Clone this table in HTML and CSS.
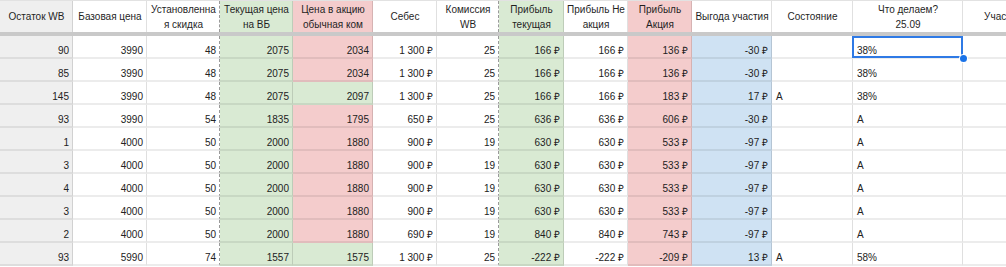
FILE: index.html
```html
<!DOCTYPE html>
<html lang="ru">
<head>
<meta charset="utf-8">
<title>Таблица</title>
<link rel="stylesheet" href="styles.css">
</head>
<body>
<div class="sheet">
  <div class="row head">
    <div class="c k">Остаток WB</div>
    <div class="c">Базовая цена</div>
    <div class="c dash">Установленна<br>я скидка</div>
    <div class="c g">Текущая цена<br>на ВБ</div>
    <div class="c p">Цена в акцию<br>обычная ком</div>
    <div class="c">Себес</div>
    <div class="c dash">Комиссия<br>WB</div>
    <div class="c g">Прибыль<br>текущая</div>
    <div class="c">Прибыль Не<br>акция</div>
    <div class="c p">Прибыль<br>Акция</div>
    <div class="c">Выгода участия</div>
    <div class="c">Состояние</div>
    <div class="c">Что делаем?<br>25.09</div>
    <div class="c">Участие</div>
  </div>
  <div class="band"></div>

  <div class="row">
    <div class="c n k">90</div><div class="c n">3990</div><div class="c n dash">48</div><div class="c n g">2075</div><div class="c n p">2034</div><div class="c n">1&nbsp;300&nbsp;₽</div><div class="c n dash">25</div><div class="c n g">166&nbsp;₽</div><div class="c n">166&nbsp;₽</div><div class="c n p">136&nbsp;₽</div><div class="c n b">-30&nbsp;₽</div><div class="c t"></div><div class="c t sel">38%</div><div class="c t"></div>
  </div>
  <div class="row">
    <div class="c n k">85</div><div class="c n">3990</div><div class="c n dash">48</div><div class="c n g">2075</div><div class="c n p">2034</div><div class="c n">1&nbsp;300&nbsp;₽</div><div class="c n dash">25</div><div class="c n g">166&nbsp;₽</div><div class="c n">166&nbsp;₽</div><div class="c n p">136&nbsp;₽</div><div class="c n b">-30&nbsp;₽</div><div class="c t"></div><div class="c t">38%</div><div class="c t"></div>
  </div>
  <div class="row">
    <div class="c n k">145</div><div class="c n">3990</div><div class="c n dash">48</div><div class="c n g">2075</div><div class="c n g">2097</div><div class="c n">1&nbsp;300&nbsp;₽</div><div class="c n dash">25</div><div class="c n g">166&nbsp;₽</div><div class="c n">166&nbsp;₽</div><div class="c n p">183&nbsp;₽</div><div class="c n b">17&nbsp;₽</div><div class="c t">A</div><div class="c t">38%</div><div class="c t"></div>
  </div>
  <div class="row">
    <div class="c n k">93</div><div class="c n">3990</div><div class="c n dash">54</div><div class="c n g">1835</div><div class="c n p">1795</div><div class="c n">650&nbsp;₽</div><div class="c n dash">25</div><div class="c n g">636&nbsp;₽</div><div class="c n">636&nbsp;₽</div><div class="c n p">606&nbsp;₽</div><div class="c n b">-30&nbsp;₽</div><div class="c t"></div><div class="c t">A</div><div class="c t"></div>
  </div>
  <div class="row">
    <div class="c n k">1</div><div class="c n">4000</div><div class="c n dash">50</div><div class="c n g">2000</div><div class="c n p">1880</div><div class="c n">900&nbsp;₽</div><div class="c n dash">19</div><div class="c n g">630&nbsp;₽</div><div class="c n">630&nbsp;₽</div><div class="c n p">533&nbsp;₽</div><div class="c n b">-97&nbsp;₽</div><div class="c t"></div><div class="c t">A</div><div class="c t"></div>
  </div>
  <div class="row">
    <div class="c n k">3</div><div class="c n">4000</div><div class="c n dash">50</div><div class="c n g">2000</div><div class="c n p">1880</div><div class="c n">900&nbsp;₽</div><div class="c n dash">19</div><div class="c n g">630&nbsp;₽</div><div class="c n">630&nbsp;₽</div><div class="c n p">533&nbsp;₽</div><div class="c n b">-97&nbsp;₽</div><div class="c t"></div><div class="c t">A</div><div class="c t"></div>
  </div>
  <div class="row">
    <div class="c n k">4</div><div class="c n">4000</div><div class="c n dash">50</div><div class="c n g">2000</div><div class="c n p">1880</div><div class="c n">900&nbsp;₽</div><div class="c n dash">19</div><div class="c n g">630&nbsp;₽</div><div class="c n">630&nbsp;₽</div><div class="c n p">533&nbsp;₽</div><div class="c n b">-97&nbsp;₽</div><div class="c t"></div><div class="c t">A</div><div class="c t"></div>
  </div>
  <div class="row">
    <div class="c n k">3</div><div class="c n">4000</div><div class="c n dash">50</div><div class="c n g">2000</div><div class="c n p">1880</div><div class="c n">900&nbsp;₽</div><div class="c n dash">19</div><div class="c n g">630&nbsp;₽</div><div class="c n">630&nbsp;₽</div><div class="c n p">533&nbsp;₽</div><div class="c n b">-97&nbsp;₽</div><div class="c t"></div><div class="c t">A</div><div class="c t"></div>
  </div>
  <div class="row">
    <div class="c n k">2</div><div class="c n">4000</div><div class="c n dash">50</div><div class="c n g">2000</div><div class="c n p">1880</div><div class="c n">690&nbsp;₽</div><div class="c n dash">19</div><div class="c n g">840&nbsp;₽</div><div class="c n">840&nbsp;₽</div><div class="c n p">743&nbsp;₽</div><div class="c n b">-97&nbsp;₽</div><div class="c t"></div><div class="c t">A</div><div class="c t"></div>
  </div>
  <div class="row">
    <div class="c n k">93</div><div class="c n">5990</div><div class="c n dash">74</div><div class="c n g">1557</div><div class="c n g">1575</div><div class="c n">1&nbsp;300&nbsp;₽</div><div class="c n dash">25</div><div class="c n g">-222&nbsp;₽</div><div class="c n">-222&nbsp;₽</div><div class="c n p">-209&nbsp;₽</div><div class="c n b">13&nbsp;₽</div><div class="c t">A</div><div class="c t">58%</div><div class="c t"></div>
  </div>
</div>
</body>
</html>
```
FILE: styles.css
```css
html, body {
  margin: 0;
  padding: 0;
  background: #ffffff;
  overflow: hidden;
}

body {
  width: 1006px;
  height: 267px;
  font-family: "Liberation Sans", Arial, sans-serif;
  font-size: 10px;
  color: #222222;
}

.sheet {
  --cols: 73px 74px 73px 73px 80px 64px 62px 65px 64px 64px 80px 81px 110px 80px;
  width: 1043px;
  border-top: 1px solid #e2e2e2;
}

.row {
  display: grid;
  grid-template-columns: var(--cols);
  height: 23px;
}

.row.head {
  height: 31px;
}

.band {
  height: 4px;
  background: #c9c9c9;
}

.c {
  box-sizing: border-box;
  display: flex;
  align-items: flex-end;
  justify-content: flex-end;
  padding: 0 3px 0 4px;
  line-height: 12px;
  white-space: nowrap;
  overflow: hidden;
  border-right: 1px solid rgba(0, 0, 0, 0.12);
  border-bottom: 2px solid rgba(0, 0, 0, 0.075);
}

.head .c {
  align-items: center;
  justify-content: center;
  text-align: center;
  line-height: 15px;
  border-bottom: none;
  color: #1f1f1f;
}

.t {
  justify-content: flex-start;
}

.k { background: #efefef; }
.g { background: #d9ead3; }
.p { background: #f4cccc; }
.b { background: #cfe2f3; }

.c.dash {
  border-right: 1px dashed #9a9a9a;
}

.sel {
  position: relative;
  overflow: visible;
}

.sel::after {
  content: "";
  position: absolute;
  left: -1px;
  top: 0;
  right: -1px;
  bottom: -1px;
  border: 2px solid #2f7ae5;
  pointer-events: none;
}

.sel::before {
  content: "";
  position: absolute;
  right: -5px;
  bottom: -5px;
  width: 7px;
  height: 7px;
  border-radius: 50%;
  background: #1a73e8;
  box-shadow: 0 0 0 1px #ffffff;
  z-index: 2;
}
```
